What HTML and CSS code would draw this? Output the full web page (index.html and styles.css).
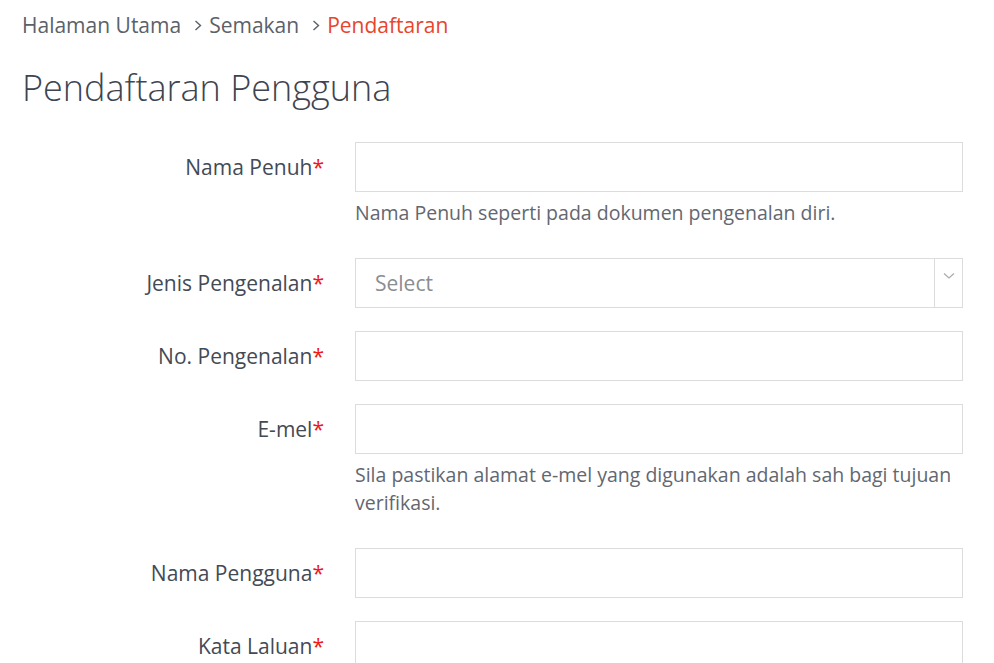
FILE: index.html
```html
<!DOCTYPE html>
<html lang="ms">
<head>
<meta charset="utf-8">
<title>Pendaftaran Pengguna</title>
<link rel="stylesheet" href="styles.css">
</head>
<body>
<div class="page">
  <nav class="crumbs">
    <span class="crumb">Halaman Utama</span>
    <svg class="sep" width="8" height="11" viewBox="0 0 8 11"><path d="M1.5 1 L6.5 5.5 L1.5 10" fill="none" stroke="#5b6169" stroke-width="1.4"/></svg>
    <span class="crumb">Semakan</span>
    <svg class="sep" width="8" height="11" viewBox="0 0 8 11"><path d="M1.5 1 L6.5 5.5 L1.5 10" fill="none" stroke="#5b6169" stroke-width="1.4"/></svg>
    <span class="crumb active">Pendaftaran</span>
  </nav>
  <h1 class="title">Pendaftaran Pengguna</h1>
  <form class="form">
    <div class="row">
      <label class="label">Nama Penuh<span class="req">*</span></label>
      <div class="field">
        <input class="input" type="text">
        <p class="help">Nama Penuh seperti pada dokumen pengenalan diri.</p>
      </div>
    </div>
    <div class="row">
      <label class="label">Jenis Pengenalan<span class="req">*</span></label>
      <div class="field">
        <div class="select">
          <span class="placeholder">Select</span>
          <span class="arrow"><svg width="12" height="8" viewBox="0 0 12 8"><path d="M1 1.5 L6 6 L11 1.5" fill="none" stroke="#aaa" stroke-width="1.2"/></svg></span>
        </div>
      </div>
    </div>
    <div class="row">
      <label class="label">No. Pengenalan<span class="req">*</span></label>
      <div class="field"><input class="input" type="text"></div>
    </div>
    <div class="row">
      <label class="label">E-mel<span class="req">*</span></label>
      <div class="field">
        <input class="input" type="text">
        <p class="help">Sila pastikan alamat e-mel yang digunakan adalah sah bagi tujuan verifikasi.</p>
      </div>
    </div>
    <div class="row">
      <label class="label">Nama Pengguna<span class="req">*</span></label>
      <div class="field"><input class="input" type="text"></div>
    </div>
    <div class="row">
      <label class="label">Kata Laluan<span class="req">*</span></label>
      <div class="field"><input class="input" type="password"></div>
    </div>
  </form>
</div>
</body>
</html>
```

FILE: styles.css
```css
html, body {
  margin: 0;
  padding: 0;
  background: #fff;
}
body {
  font-family: "Open Sans", "Noto Sans", sans-serif;
  color: #434a54;
  overflow: hidden;
}
.page {
  padding: 8px 31px 0 22px;
}
.crumbs {
  display: flex;
  align-items: center;
  font-size: 21px;
  line-height: 34px;
  color: #5b6169;
}
.sep {
  display: block;
  margin: 1px 7px 0 13px;
}
.active {
  color: #e8452c;
}
.title {
  font-weight: 300;
  font-size: 36px;
  line-height: 50px;
  margin: 21px 0 0 0;
  color: #3d4450;
}
.form {
  margin-top: 29px;
}
.row {
  display: grid;
  grid-template-columns: 302px 1fr;
  column-gap: 31px;
  margin-bottom: 23px;
}
.label {
  text-align: right;
  font-size: 21px;
  line-height: 50px;
  color: #434a54;
}
.req {
  color: #f01818;
}
.input {
  display: block;
  box-sizing: border-box;
  width: 100%;
  height: 50px;
  border: 1px solid #dcdcdc;
  border-radius: 0;
  margin: 0;
  padding: 0 18px;
  font: inherit;
  background: #fff;
}
.help {
  margin: 7px 0 8px 0;
  font-size: 19.5px;
  line-height: 28px;
  color: #626770;
}
.select {
  box-sizing: border-box;
  height: 50px;
  border: 1px solid #dcdcdc;
  display: flex;
  align-items: stretch;
}
.placeholder {
  flex: 1;
  padding-left: 19px;
  font-size: 21px;
  line-height: 48px;
  color: #8a8d92;
}
.arrow {
  width: 27px;
  border-left: 1px solid #dcdcdc;
  display: flex;
  align-items: center;
  justify-content: center;
  padding-bottom: 14px;
}
```
